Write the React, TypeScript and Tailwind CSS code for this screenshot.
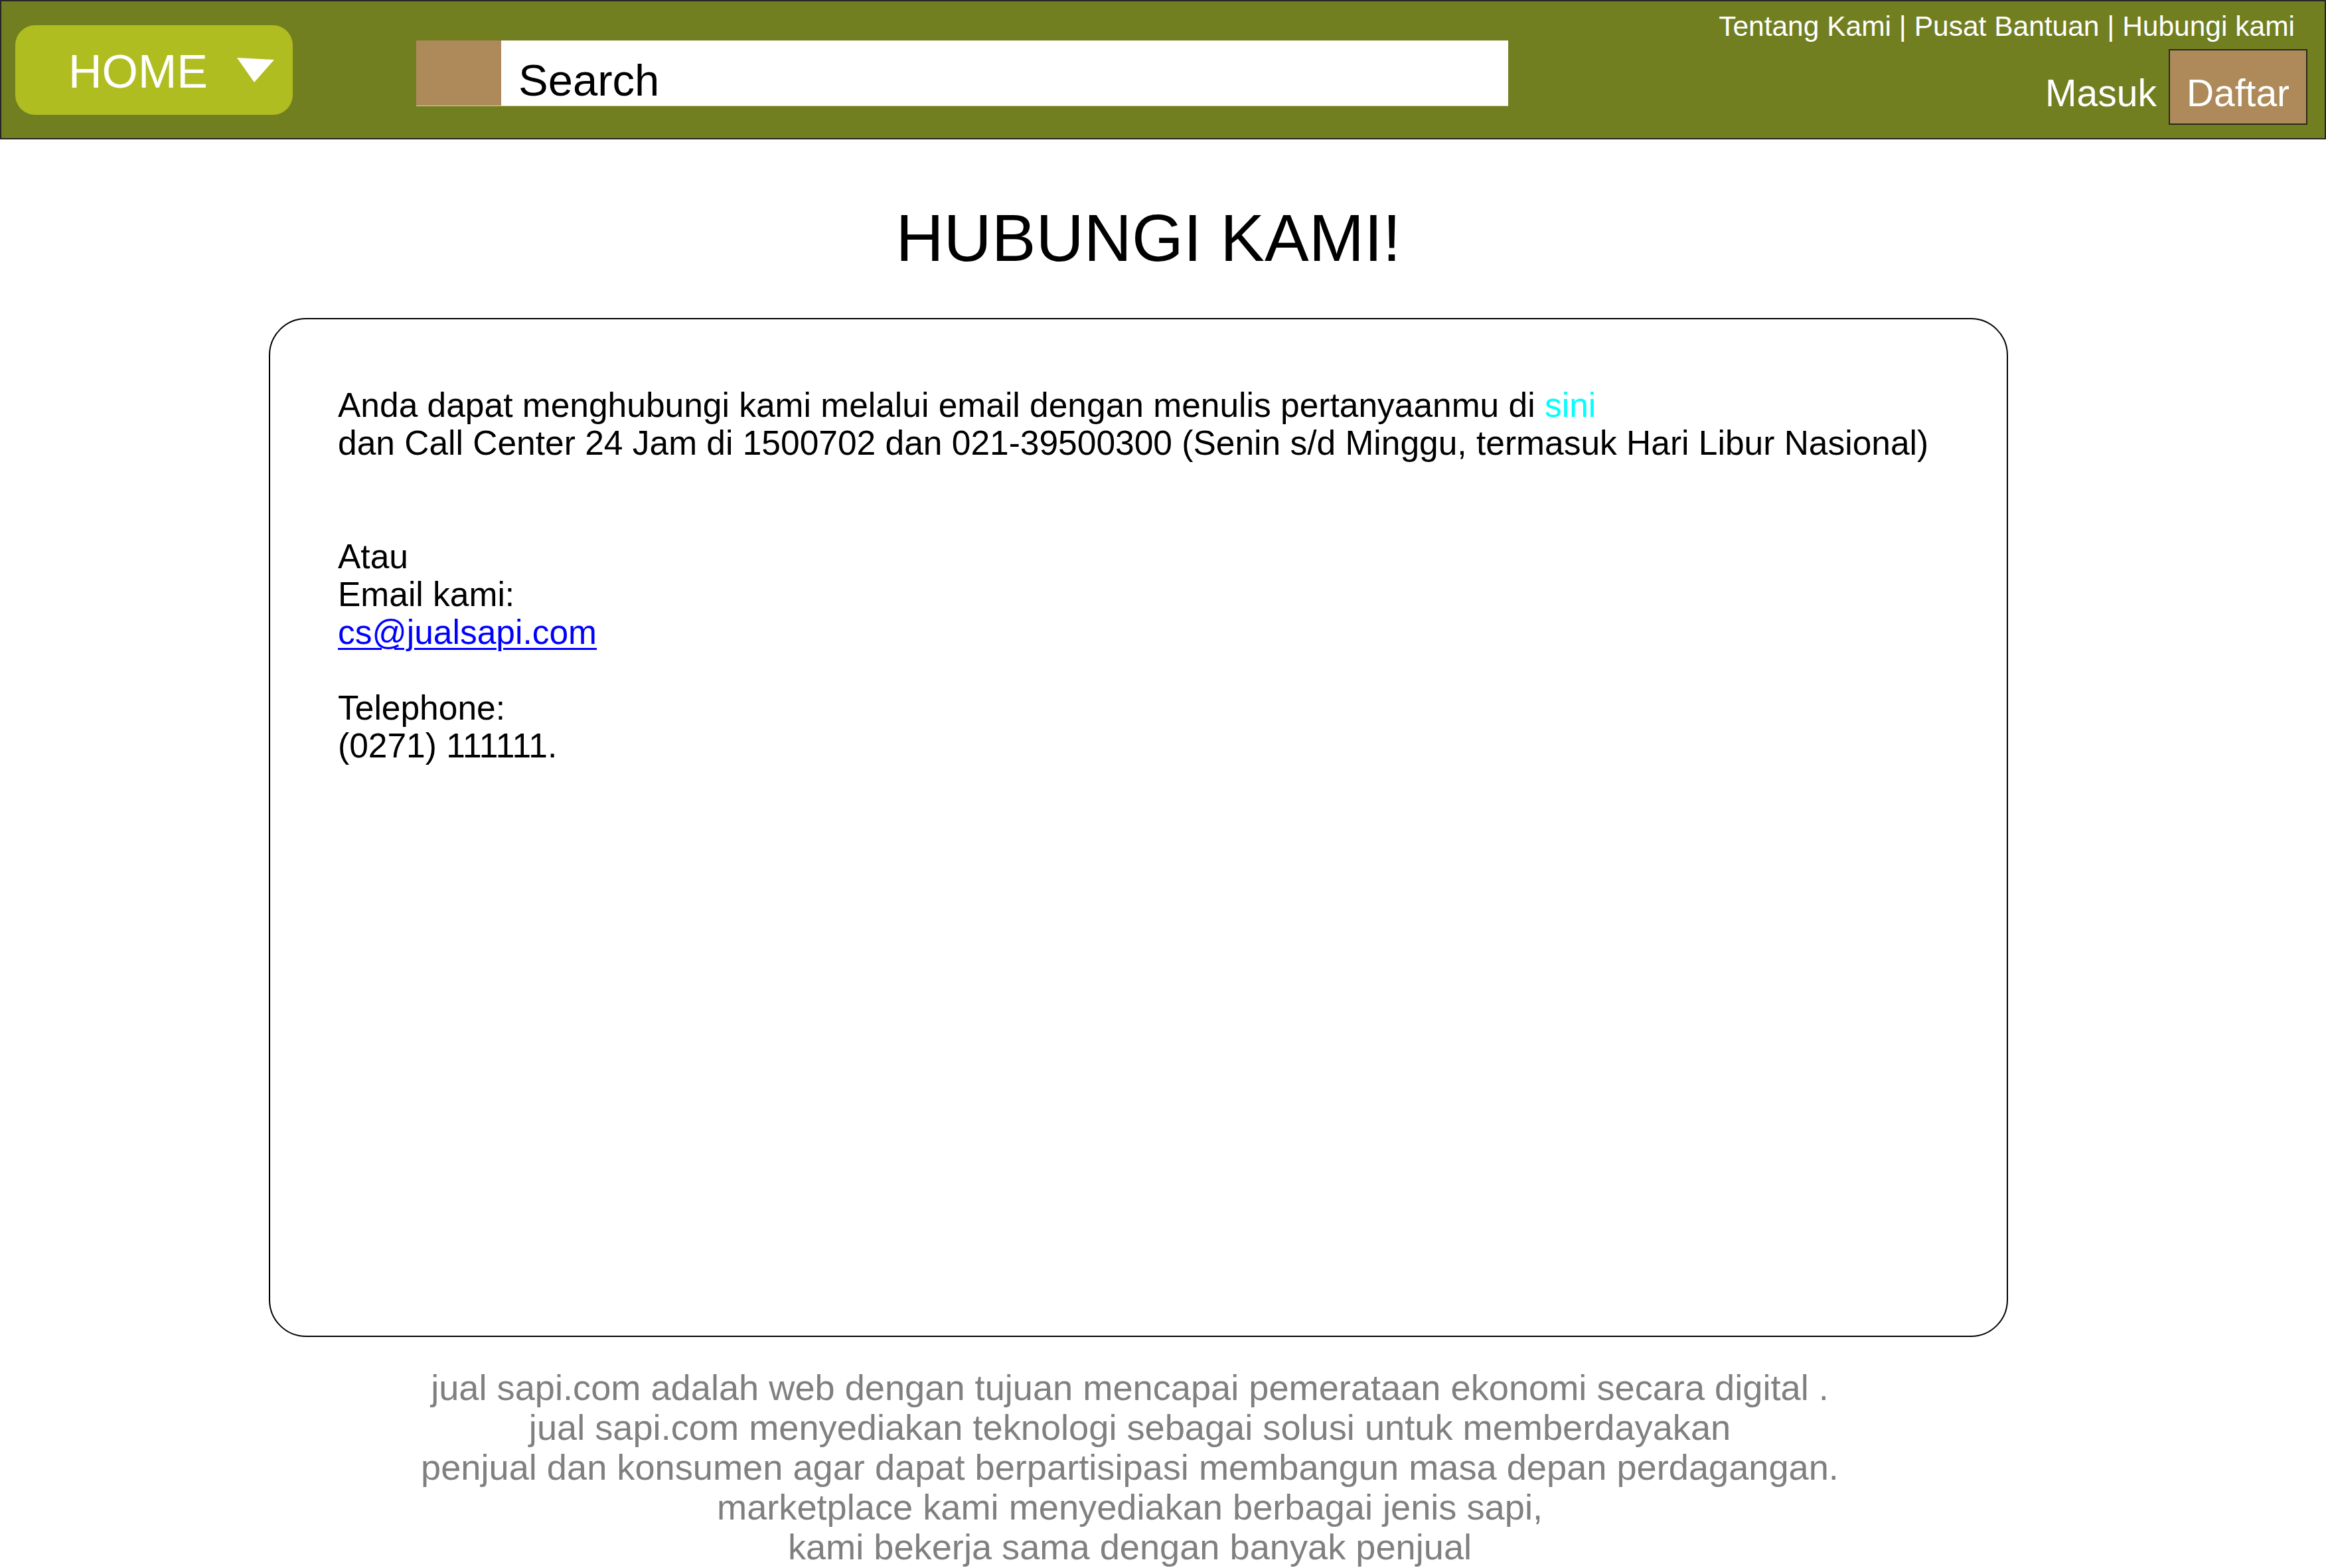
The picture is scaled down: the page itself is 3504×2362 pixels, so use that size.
import React from 'react';

const font = "font-['Liberation_Sans',Arial,sans-serif]";

const footerLines = [
  'jual sapi.com adalah web dengan tujuan mencapai pemerataan ekonomi secara digital .',
  'jual sapi.com menyediakan teknologi sebagai solusi untuk memberdayakan',
  'penjual dan konsumen agar dapat berpartisipasi membangun masa depan perdagangan.',
  'marketplace kami menyediakan berbagai jenis sapi,',
  'kami bekerja sama dengan banyak penjual',
];

const Header: React.FC = () => (
  <header className="flex items-start h-[210px] border-2 border-[#262626] bg-[#727f21]">
    {/* home dropdown */}
    <div className="ml-[21px] mt-[36px] flex items-center w-[418px] h-[135px] rounded-[30px] bg-[#b0bd20] pl-[80px] pt-[4px]">
      <span className="text-[70px] leading-none text-white">HOME</span>
      <svg width="56" height="37" viewBox="0 0 56 37" className="ml-[44px] -mt-[4px]">
        <polygon points="0,0 56,3 26,37" fill="#ffffff" />
      </svg>
    </div>

    {/* search */}
    <div className="ml-[186px] mt-[59px] flex h-[99px] border-b border-[#d9cfa6]">
      <div className="w-[128px] bg-[#ae8a5a]" />
      <div className="w-[1517px] bg-white pl-[26px] pt-[26px]">
        <span className="text-[67px] leading-none text-black">Search</span>
      </div>
    </div>

    {/* right links */}
    <div className="ml-auto flex flex-col items-end">
      <div className="mt-[17px] mr-[45px] text-[42.5px] leading-none text-white whitespace-nowrap">
        Tentang Kami | Pusat Bantuan | Hubungi kami
      </div>
      <div className="mt-[12px] mr-[26px] flex items-start">
        <span className="mt-[38px] mr-[18px] text-[57px] leading-none text-white">Masuk</span>
        <div className="w-[209px] h-[114px] border-2 border-[#2a2a1a] bg-[#ae8a5a] pt-[36px] text-center">
          <span className="text-[57px] leading-none text-white">Daftar</span>
        </div>
      </div>
    </div>
  </header>
);

const ContactCard: React.FC = () => (
  <div className="mt-[71px] h-[1535px] rounded-[56px] border-[2.5px] border-black bg-white pl-[102px] pt-[101px] text-[51.5px] leading-[57px] text-black">
    <p>
      Anda dapat menghubungi kami melalui email dengan menulis pertanyaanmu di{' '}
      <span className="text-[#00ffff]">sini</span>
    </p>
    <p>dan Call Center 24 Jam di 1500702 dan 021-39500300 (Senin s/d Minggu, termasuk Hari Libur Nasional)</p>
    <p>&nbsp;</p>
    <p>&nbsp;</p>
    <p>Atau</p>
    <p>Email kami:</p>
    <p>
      <a href="#" className="text-[#0000ff] underline decoration-[3px] underline-offset-[6px]">
        cs@jualsapi.com
      </a>
    </p>
    <p>&nbsp;</p>
    <p>Telephone:</p>
    <p>(0271) 111111.</p>
  </div>
);

export default function App() {
  return (
    <div className={`${font} min-h-[2362px] w-[3504px] bg-white`}>
      <Header />
      <main className="ml-[405px] w-[2620px]">
        <h1 className="mt-[98px] pl-[30px] text-center text-[100px] leading-none text-black">HUBUNGI KAMI!</h1>
        <ContactCard />
        <footer className="mt-[46px] pr-[26px] text-center text-[54.2px] leading-[60px] text-[#808080]">
          {footerLines.map((line) => (
            <p key={line} className="whitespace-nowrap">{line}</p>
          ))}
        </footer>
      </main>
    </div>
  );
}
